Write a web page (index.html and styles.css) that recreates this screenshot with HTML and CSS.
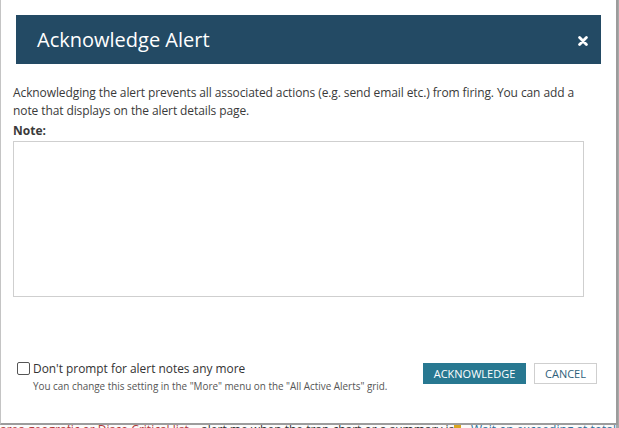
FILE: index.html
```html
<!DOCTYPE html>
<html>
<head>
<meta charset="utf-8">
<link rel="stylesheet" href="styles.css">
</head>
<body>
<div class="backdrop">
  <div class="backdrop-row">
    <span class="bd-red">area geografic or Disco Critical list</span>
    <span class="bd-dark">alert me when the trap chart or a summary is</span>
    <span class="bd-icon"></span>
    <span class="bd-blue">Wait on exceeding at total</span>
  </div>
</div>
<div class="dialog">
  <div class="dialog-header">
    <span class="dialog-title">Acknowledge Alert</span>
    <svg class="close-icon" width="10" height="10" viewBox="0 0 10 10"><path d="M1.6 1.6 L8.4 8.4 M8.4 1.6 L1.6 8.4" stroke="#fff" stroke-width="2.8" stroke-linecap="round"/></svg>
  </div>
  <div class="dialog-body">
    <p class="intro">Acknowledging the alert prevents all associated actions (e.g. send email etc.) from firing. You can add a note that displays on the alert details page.</p>
    <label class="note-label">Note:</label>
    <textarea class="note"></textarea>
  </div>
  <div class="dialog-footer">
    <div class="prompt">
      <label class="prompt-line"><span class="checkbox"></span><span class="prompt-text">Don't prompt for alert notes any more</span></label>
      <div class="prompt-hint">You can change this setting in the "More" menu on the "All Active Alerts" grid.</div>
    </div>
    <div class="actions">
      <button class="btn btn-primary">ACKNOWLEDGE</button>
      <button class="btn btn-secondary">CANCEL</button>
    </div>
  </div>
</div>
</body>
</html>
```

FILE: styles.css
```css
html, body {
  margin: 0;
  padding: 0;
  width: 619px;
  height: 428px;
  overflow: hidden;
  background: #ffffff;
  font-family: "Open Sans", "DejaVu Sans", sans-serif;
}

.backdrop {
  height: 428px;
  background: #fbfbfb;
  display: flex;
  flex-direction: column;
  justify-content: flex-end;
  border-right: 3px solid #a9a9a9;
  box-sizing: border-box;
}

.backdrop-row {
  display: flex;
  align-items: flex-start;
  height: 5px;
  overflow: hidden;
  font-size: 12px;
  line-height: 14px;
  white-space: nowrap;
}

.bd-red { color: #b23a3a; width: 205px; overflow: hidden; }
.bd-dark { color: #333; width: 258px; overflow: hidden; }
.bd-icon { width: 7px; height: 7px; background: #d9a520; margin-top: 2px; margin-right: 10px; }
.bd-blue { color: #2f6f99; }

.dialog {
  position: absolute;
  left: 0;
  top: 0;
  width: 618px;
  height: 425px;
  box-sizing: border-box;
  background: #ffffff;
  border-left: 1px solid #c4c4c4;
  border-right: 2px solid #9c9c9c;
  border-bottom: 2px solid #9c9c9c;
  display: flex;
  flex-direction: column;
}

.dialog-header {
  margin: 15px 15px 0 15px;
  height: 49px;
  background: #234a64;
  display: flex;
  align-items: center;
  justify-content: space-between;
  padding: 0 13px 0 21px;
}

.dialog-title {
  color: #ffffff;
  font-size: 20px;
}

.close-icon {
  display: block;
  margin-top: 2px;
}

.dialog-body {
  padding: 20px 31px 0 12px;
}

.intro {
  margin: 0;
  font-size: 12px;
  letter-spacing: -0.1px;
  line-height: 18px;
  color: #3a3a3a;
}

.note-label {
  display: block;
  margin-top: 2px;
  font-size: 12px;
  line-height: 18px;
  font-weight: bold;
  color: #3a3a3a;
}

.note {
  display: block;
  margin-top: 1px;
  width: 571px;
  height: 156px;
  box-sizing: border-box;
  border: 1px solid #cfcfcf;
  resize: none;
  padding: 4px;
  font-family: inherit;
}

.dialog-footer {
  margin-top: auto;
  padding: 0 19px 30px 16px;
  display: flex;
  justify-content: space-between;
  align-items: flex-start;
}

.prompt-line {
  display: flex;
  align-items: center;
}

.checkbox {
  width: 11px;
  height: 11px;
  border: 1px solid #555;
  border-radius: 2px;
  background: #fff;
  margin-right: 3px;
}

.prompt-text {
  font-size: 11.9px;
  line-height: 16px;
  color: #333;
}

.prompt-hint {
  margin-top: 4px;
  padding-left: 16px;
  font-size: 9.9px;
  line-height: 13px;
  color: #555;
}

.actions {
  display: flex;
  gap: 8px;
  margin-top: 3px;
}

.btn {
  height: 21px;
  box-sizing: border-box;
  font-family: "Open Sans", "DejaVu Sans", sans-serif;
  font-size: 11px;
  padding: 0;
  cursor: pointer;
}

.btn-primary {
  width: 103px;
  background: #287891;
  color: #ffffff;
  border: none;
}

.btn-secondary {
  width: 63px;
  background: #ffffff;
  color: #2f5f7a;
  border: 1px solid #cfcfcf;
}
```
